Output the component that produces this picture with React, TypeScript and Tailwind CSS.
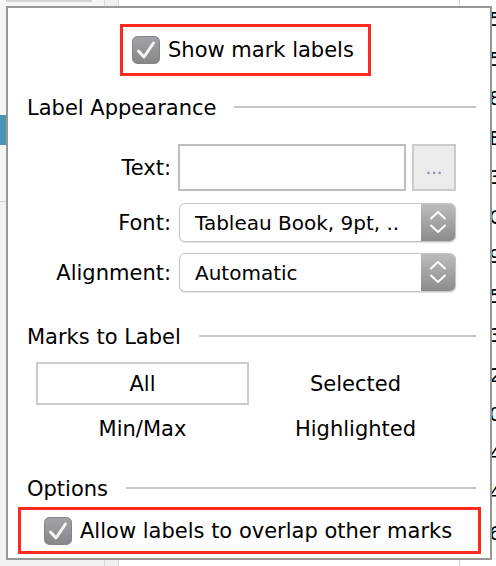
import React from "react";

function CheckBox() {
  return (
    <svg width="28" height="28" viewBox="0 0 28 28" className="shrink-0">
      <defs>
        <linearGradient id="cbg" x1="0" y1="0" x2="0" y2="1">
          <stop offset="0" stopColor="#a2a2a7" />
          <stop offset="1" stopColor="#86868b" />
        </linearGradient>
      </defs>
      <rect x="0.5" y="0.5" width="27" height="27" rx="5" fill="url(#cbg)" stroke="#838388" />
      <path d="M6.5 15 L12 21 L21.5 7" fill="none" stroke="#f5f5f5" strokeWidth="3" strokeLinecap="round" strokeLinejoin="round" />
    </svg>
  );
}

function Header({ title }: { title: string }) {
  return (
    <div className="flex h-[24px] items-center pl-[19px] pr-[14px] leading-[24px]">
      <span className="text-[21px]">{title}</span>
      <span className="mb-[3px] ml-[18px] h-[2px] flex-1 bg-[#c6c6c6]" />
    </div>
  );
}

function Select({ text }: { text: string }) {
  return (
    <div className="flex h-[39px] w-[277px] overflow-hidden rounded-[6px] border border-[#c4c4c4] bg-white shadow-[0_1px_1px_rgba(0,0,0,0.12)]">
      <div className="flex flex-1 items-center pl-[15px] text-[20px] leading-[24px]">{text}</div>
      <div className="flex w-[34px] items-center justify-center bg-gradient-to-b from-[#bcbcbc] to-[#8c8c8c]">
        <svg width="34" height="39" viewBox="0 0 34 39">
          <path d="M10 15.5 L17 9 L24 15.5 M10 22.5 L17 29 L24 22.5" fill="none" stroke="#ffffff" strokeWidth="2" strokeLinecap="round" strokeLinejoin="round" />
        </svg>
      </div>
    </div>
  );
}

const digits = ["5", "5", "8", "E", "3", "C", "9", "5", "3", "2", "0", "4", "4", "6"];

export default function App() {
  return (
    <div className="relative h-[566px] w-[496px] overflow-hidden bg-white font-['DejaVu_Sans',sans-serif] text-[#111]">
      {/* background windows */}
      <div className="flex h-full">
        <div className="flex w-[104px] flex-col bg-[#f6f6f6]">
          <div className="ml-[6px] h-[2px] w-[86px] bg-[#d4d4d4]" />
          <div className="mt-[113px] h-[30px] w-[6px] bg-[#4a96b4]" />
          <div className="mt-[56px] h-[1px] bg-[#d2d2d2]" />
          <div className="flex-1 bg-[#f2f2f2]" />
        </div>
        <div className="w-[14px] border-l border-[#d9d9d9] bg-[#efefef]" />
        <div className="w-[341px] border-l border-[#d4d4d4] bg-white" />
        <div className="flex-1 overflow-hidden border-l border-[#d4d4d4] bg-white pl-[29px] text-[20px] leading-[39.5px] text-black">
          {digits.map((d, i) => (
            <div key={i}>{d}</div>
          ))}
        </div>
      </div>

      {/* popup panel */}
      <div className="absolute left-[6px] top-[6px] flex h-[554px] w-[486px] flex-col border-2 border-[#979797] bg-white text-[21px] leading-[24px] text-black">
        <div className="ml-[112px] mt-[16px] flex h-[52px] w-[251px] items-center gap-[8px] border-[3px] border-[#fb2b22] pl-[9px]">
          <CheckBox />
          <span className="text-[21px]">Show mark labels</span>
        </div>

        <div className="mt-[20px]">
          <Header title="Label Appearance" />
        </div>

        <div className="mt-[24px] flex h-[47px] items-center">
          <span className="w-[163px] text-right">Text:</span>
          <div className="ml-[7px] h-[47px] w-[228px] border-2 border-[#bdbdbd] bg-white" />
          <div className="ml-[6px] flex h-[47px] w-[44px] items-center justify-center border-2 border-[#cbcbcb] bg-[#ebebeb] text-[18px] text-[#7f8aa6]">
            ...
          </div>
        </div>

        <div className="mt-[12px] flex h-[39px] items-center">
          <span className="w-[163px] text-right">Font:</span>
          <div className="ml-[8px]">
            <Select text="Tableau Book, 9pt, .." />
          </div>
        </div>

        <div className="mt-[11px] flex h-[39px] items-center">
          <span className="w-[163px] text-right">Alignment:</span>
          <div className="ml-[8px]">
            <Select text="Automatic" />
          </div>
        </div>

        <div className="mt-[33px]">
          <Header title="Marks to Label" />
        </div>

        <div className="ml-[28px] mt-[13px] grid w-[426px] grid-cols-2 gap-y-[2px]">
          <div className="flex h-[43px] items-center justify-center border-2 border-[#cbcbcb] bg-white">All</div>
          <div className="flex h-[43px] items-center justify-center">Selected</div>
          <div className="flex h-[43px] items-center justify-center">Min/Max</div>
          <div className="flex h-[43px] items-center justify-center">Highlighted</div>
        </div>

        <div className="mt-[27px]">
          <Header title="Options" />
        </div>

        <div className="ml-[10px] mt-[6px] flex h-[47px] w-[463px] items-center gap-[8px] border-[3px] border-[#fb2b22] pl-[23px]">
          <CheckBox />
          <span>Allow labels to overlap other marks</span>
        </div>
      </div>
    </div>
  );
}
